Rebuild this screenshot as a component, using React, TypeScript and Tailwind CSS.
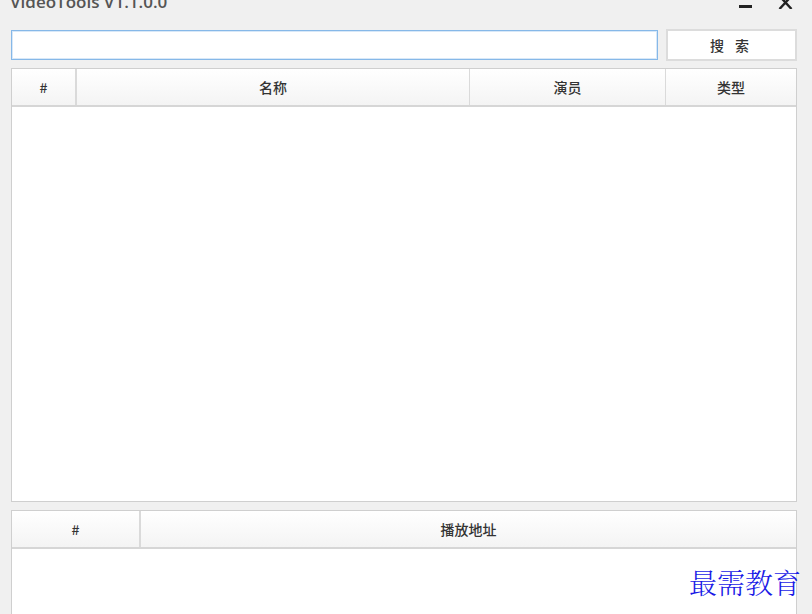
import React from "react";

const cjk = { fontFamily: '"Noto Sans CJK SC", "Liberation Sans", sans-serif' };

export default function App() {
  return (
    <div className="w-[812px] h-[614px] overflow-hidden bg-[#f0f0f0] relative" style={cjk}>
      {/* title bar */}
      <div className="h-[30px] flex items-start justify-between pl-[10px] pr-[19px]">
        <div
          className="text-[17px] leading-[20px] -mt-[8px] text-[#555] font-semibold"
          style={{ fontFamily: '"Open Sans", "Liberation Sans", sans-serif' }}
        >
          VideoTools V1.1.0.0
        </div>
        <div className="flex items-start gap-[26px]">
          <div className="w-[13px] h-[3px] bg-[#222] mt-[5px]" />
          <svg width="15" height="13" viewBox="0 0 15 13" className="-mt-[4px]">
            <path d="M1.5 0 L13.5 13 M13.5 0 L1.5 13" stroke="#222" strokeWidth="2.4" />
          </svg>
        </div>
      </div>

      {/* search row */}
      <div className="flex items-start pl-[11px] h-[38px]">
        <div className="w-[647px] h-[30px] bg-white border border-[#86b8e8] shadow-[inset_0_0_0_1px_#d8e8f8]" />
        <div className="ml-[8px] w-[131px] h-[32px] -mt-[1px] bg-white border-2 border-[#dcdcdc] flex items-center justify-center text-[14px] text-[#333] tracking-[4px] font-medium">
          搜 索
        </div>
      </div>

      {/* main table */}
      <div className="ml-[11px] w-[786px] h-[434px] bg-white border border-[#cfcfcf] flex flex-col">
        <div className="h-[38px] flex border-b-2 border-[#d6d6d6] bg-gradient-to-b from-white to-[#f4f4f4] text-[14px] text-[#333] font-medium">
          <div className="w-[65px] flex items-center justify-center border-r-2 border-[#dadada]">#</div>
          <div className="w-[393px] flex items-center justify-center border-r border-[#dadada]">名称</div>
          <div className="w-[196px] flex items-center justify-center border-r border-[#dadada]">演员</div>
          <div className="flex-1 flex items-center justify-center">类型</div>
        </div>
        <div className="flex-1" />
      </div>

      {/* bottom table */}
      <div className="ml-[11px] mt-[8px] w-[786px] h-[200px] bg-white border border-[#cfcfcf] flex flex-col">
        <div className="h-[38px] flex border-b-2 border-[#d6d6d6] bg-gradient-to-b from-white to-[#f4f4f4] text-[14px] text-[#333] font-medium">
          <div className="w-[129px] flex items-center justify-center border-r-2 border-[#dadada]">#</div>
          <div className="flex-1 flex items-center justify-center">播放地址</div>
        </div>
        <div className="flex-1" />
      </div>

      {/* watermark */}
      <div
        className="absolute left-[689px] top-[564px] text-[28px] leading-[36px] text-[#1a1ae6]"
        style={{ fontFamily: '"Noto Serif CJK SC", "Noto Sans CJK SC", serif', fontWeight: 300 }}
      >
        最需教育
      </div>
    </div>
  );
}
